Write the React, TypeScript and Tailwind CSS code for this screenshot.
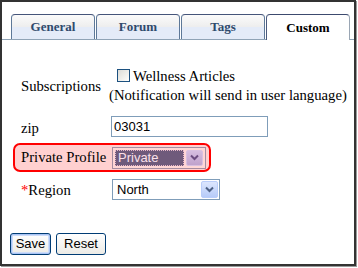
import React from "react";

const serif = { fontFamily: '"Liberation Serif", "Times New Roman", serif' };
const sans = { fontFamily: '"Liberation Sans", Arial, sans-serif' };

function Chevron({ color }: { color: string }) {
  return (
    <svg width="9" height="7" viewBox="0 0 9 7">
      <path d="M1 1.5 L4.5 5 L8 1.5" fill="none" stroke={color} strokeWidth="2" />
    </svg>
  );
}

function Tab({ label, active }: { label: string; active?: boolean }) {
  if (active) {
    return (
      <div className="w-[84px] h-[26px] mb-[-1px] rounded-t-[4px] border border-b-0 border-t-[#3c4a6e] border-l-[#4a5a7e] border-r-[#9aa6b4] bg-white flex items-center justify-center text-[13px] font-bold text-black" style={serif}>
        {label}
      </div>
    );
  }
  return (
    <div className="w-[84px] h-[25px] rounded-t-[4px] border border-b-0 border-t-[#45557a] border-x-[#5d7898] bg-[linear-gradient(to_bottom,#fbfbfb_0%,#eeeeee_48%,#e4ebf8_50%,#e4ebf8_100%)] flex items-center justify-center text-[13px] font-bold text-[#2f4a6c]" style={serif}>
      {label}
    </div>
  );
}

export default function App() {
  return (
    <div className="w-[358px] h-[268px] bg-white">
      <div className="w-[356px] h-[266px] border-2 border-[#333333] shadow-[1px_1px_0_#9a9a9a] flex flex-col bg-white">
        <div className="flex items-end gap-[1px] pl-[9px] h-[38px] border-b border-[#8fa3b6]">
          <Tab label="General" />
          <Tab label="Forum" />
          <Tab label="Tags" />
          <Tab label="Custom" active />
        </div>

        <div className="flex flex-col text-[14.7px] text-black" style={serif}>
          {/* Subscriptions */}
          <div className="flex items-center pl-[19px] mt-[27px] h-[38px]">
            <div className="w-[88px]">Subscriptions</div>
            <div className="flex flex-col leading-[19px]">
              <div className="flex items-start">
                <div className="ml-[8px] mt-[2px] w-[13px] h-[13px] border border-[#1c5180] bg-[linear-gradient(135deg,#dcdcd7_0%,#f4f4f0_70%,#ffffff_100%)]" />
                <span className="ml-[3px] whitespace-nowrap">Wellness Articles</span>
              </div>
              <div className="whitespace-nowrap">(Notification will send in user language)</div>
            </div>
          </div>

          {/* zip */}
          <div className="flex items-center pl-[19px] mt-[11px] h-[21px]">
            <div className="w-[88px] pt-[3px]">zip</div>
            <div className="ml-[2px] w-[157px] h-[21px] border border-[#7f9db9] bg-white flex items-center pl-[2px] text-[13px]" style={sans}>
              03031
            </div>
          </div>

          {/* Private Profile */}
          <div className="ml-[11px] mt-[6px] w-[198px] h-[29px] border-2 border-[#ff0000] rounded-[7px] bg-[#ffd0d0] flex items-center pl-[6px]">
            <div className="w-[88px] whitespace-nowrap">Private Profile</div>
            <div className="ml-[3px] w-[94px] h-[22px] border border-[#a48ca0] bg-[#ffd6d6] flex items-center p-[2px]">
              <div className="flex-1 h-full bg-[#6f5a7b] border border-dotted border-[#e8b8c8] flex items-center pl-[2px] text-[13px] text-[#fbe0ea]" style={sans}>
                Private
              </div>
              <div className="ml-[2px] w-[17px] h-full rounded-[2px] border border-[#d8c0e0] bg-[linear-gradient(to_bottom,#d6bde0,#c0a2cc)] flex items-center justify-center">
                <Chevron color="#6c4c80" />
              </div>
            </div>
          </div>

          {/* Region */}
          <div className="flex items-center pl-[19px] mt-[7px] h-[21px]">
            <div className="w-[88px] pt-[2px]">
              <span className="text-[#ff0000]">*</span>Region
            </div>
            <div className="ml-[3px] w-[108px] h-[21px] border border-[#7f9db9] bg-white flex items-center p-[1px]">
              <div className="flex-1 pl-[3px] text-[13px]" style={sans}>
                North
              </div>
              <div className="w-[17px] h-full rounded-[2px] border border-[#b9cdfa] bg-[linear-gradient(to_bottom,#dce6fd,#b6cbf9)] flex items-center justify-center">
                <Chevron color="#4d6185" />
              </div>
            </div>
          </div>

          {/* Buttons */}
          <div className="flex pl-[8px] mt-[33px] gap-[5px] text-[13px]" style={sans}>
            <div className="w-[41px] h-[22px] rounded-[3px] border border-[#003c74] bg-[linear-gradient(to_bottom,#ffffff,#ecebe6)] shadow-[inset_0_0_0_1px_#a9c4f5,inset_0_0_0_2px_#cddcf8] flex items-center justify-center">
              Save
            </div>
            <div className="w-[50px] h-[22px] rounded-[3px] border border-[#003c74] bg-[linear-gradient(to_bottom,#ffffff,#ecebe6)] flex items-center justify-center">
              Reset
            </div>
          </div>
        </div>
      </div>
    </div>
  );
}
